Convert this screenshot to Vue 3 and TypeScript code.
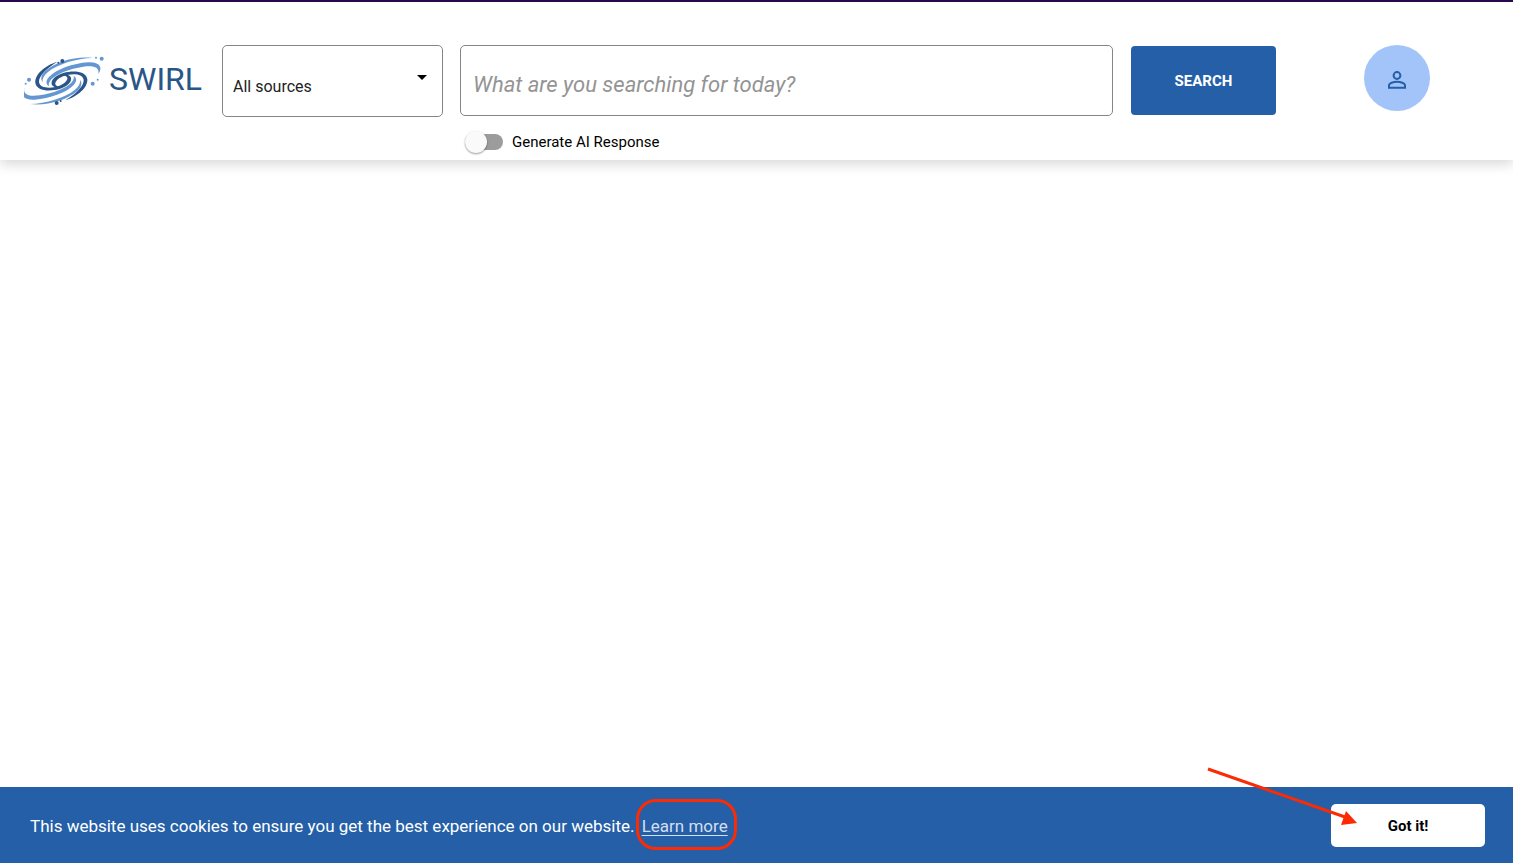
<script setup lang="ts">
import { ref } from 'vue'

const sources = ['All sources']
const source = ref(sources[0])
const query = ref('')
const generateAi = ref(false)
</script>

<template>
  <div class="page">
    <header class="header">
      <a class="logo" href="#" aria-label="SWIRL home">
        <svg class="galaxy" viewBox="12 18 243 150" aria-hidden="true">
          <defs>
            <g id="arm">
              <path fill="#6496d2" d="M235 73 C240 51 220 46 190 50 C148 56 110 72 94 88 C87 96 85 103 87 109 C77 102 77 92 87 81 C108 58 160 40 204 37 C238 35 250 51 235 73Z" />
              <path fill="#6496d2" d="M218 24 C170 25 114 42 84 66 C72 76 66 86 68 96 C60 86 64 74 76 63 C110 34 168 18 218 24Z" />
              <path fill="#2a5587" d="M112 35 C74 46 44 74 46 98 C49 122 86 126 118 117 C142 109 156 96 153 83 C149 73 134 71 118 76 C134 75 144 79 142 87 C139 98 124 107 106 111 C84 115 60 114 57 96 C56 76 84 52 112 35Z" />
            </g>
          </defs>
          <use href="#arm" />
          <use href="#arm" transform="rotate(180 124 93)" />
          <g fill="#2a5587">
            <circle cx="127" cy="33" r="6" />
            <circle cx="115" cy="38" r="3" />
            <circle cx="110" cy="159" r="6" />
            <circle cx="122" cy="153" r="3" />
          </g>
          <g fill="#6496d2">
            <circle cx="245" cy="26" r="6" />
            <circle cx="228" cy="23" r="3" />
            <circle cx="218" cy="101" r="6" />
            <circle cx="233" cy="89" r="3" />
            <circle cx="27" cy="89" r="6" />
            <circle cx="17" cy="101" r="3" />
          </g>
        </svg>
        <span class="wordmark">SWIRL</span>
      </a>

      <div class="source">
        <select v-model="source" aria-label="Source">
          <option v-for="s in sources" :key="s">{{ s }}</option>
        </select>
        <svg class="caret" viewBox="0 0 10 5" aria-hidden="true"><path d="M0 0h10L5 5z" /></svg>
      </div>

      <div class="search">
        <input
          v-model="query"
          class="query"
          type="text"
          aria-label="Search"
          placeholder="What are you searching for today?"
        />
        <label class="toggle">
          <input v-model="generateAi" type="checkbox" role="switch" />
          <span>Generate AI Response</span>
        </label>
      </div>

      <button class="submit" type="button">SEARCH</button>

      <button class="avatar" type="button" aria-label="Account">
        <svg viewBox="0 0 18 18" aria-hidden="true">
          <circle cx="9" cy="4.5" r="3.4" />
          <path d="M1 16.8v-2.6c0-2 4.5-3.5 8-3.5s8 1.5 8 3.5v2.6z" />
        </svg>
      </button>
    </header>

    <main class="results"></main>

    <footer class="cookies">
      <p>
        This website uses cookies to ensure you get the best experience on our website.
        <a class="learn" href="#">Learn more</a>
      </p>
      <button class="accept" type="button">
        Got it!
        <svg class="arrow" viewBox="0 0 152 60" aria-hidden="true">
          <path d="M2 2L139 50" fill="none" stroke="#fc2b03" stroke-width="3" />
          <path d="M151 56l-11-12-5 14z" fill="#fc2b03" />
        </svg>
      </button>
    </footer>
  </div>
</template>

<style>
body {
  margin: 0;
}
</style>

<style scoped>
.page {
  display: flex;
  flex-direction: column;
  min-height: 100vh;
  box-sizing: border-box;
  border-top: 2px solid #2a0753;
  background: #fff;
  color: #000;
  font-family: Roboto, "Liberation Sans", sans-serif;
}

button,
select,
input {
  box-sizing: border-box;
  margin: 0;
  font-family: inherit;
}

button {
  border: 0;
  cursor: pointer;
}

.header {
  display: flex;
  align-items: flex-start;
  padding: 43px 83px 6px 24px;
  box-shadow: 0 4px 12px rgba(0, 0, 0, 0.16);
}

.logo {
  display: flex;
  align-items: center;
  gap: 4px;
  flex: 0 0 198px;
  height: 72px;
  color: #2a5587;
  text-decoration: none;
}

.galaxy {
  width: 81px;
  height: 50px;
}

.wordmark {
  padding-bottom: 4px;
  font-size: 32px;
  line-height: 36px;
}

.source {
  position: relative;
  flex: 0 0 221px;
  margin-right: 17px;
}

.source select {
  display: block;
  appearance: none;
  width: 100%;
  height: 72px;
  padding: 10px 40px 0 10px;
  border: 1px solid #858585;
  border-radius: 5px;
  background: #fff;
  color: #222;
  font-size: 16px;
}

.caret {
  position: absolute;
  top: 30px;
  right: 16px;
  width: 10px;
  height: 5px;
  pointer-events: none;
}

.search {
  display: flex;
  flex-direction: column;
  align-items: flex-start;
  flex: 1;
  min-width: 0;
  margin-right: 18px;
}

.query {
  width: 100%;
  height: 71px;
  padding: 8px 12px 0;
  border: 1px solid #858585;
  border-radius: 5px;
  background: #fff;
  font-size: 22px;
}

.query::placeholder {
  color: #949494;
  font-style: italic;
  opacity: 1;
}

.toggle {
  display: flex;
  align-items: center;
  gap: 9px;
  height: 24px;
  margin: 14px 0 0 5px;
  font-size: 15px;
}

.toggle input {
  display: flex;
  align-items: center;
  appearance: none;
  width: 38px;
  height: 16px;
  border-radius: 8px;
  background: #9c9c9c;
}

.toggle input::before {
  content: "";
  width: 22px;
  height: 22px;
  border-radius: 50%;
  background: #fafafa;
  box-shadow: 0 1px 2px rgba(0, 0, 0, 0.4);
}

.toggle input:checked::before {
  margin-left: 16px;
}

.submit {
  flex: 0 0 145px;
  height: 69px;
  margin: 1px 88px 0 0;
  border-radius: 4px;
  background: #245fa8;
  color: #fff;
  font-size: 15px;
  font-weight: 700;
}

.avatar {
  display: grid;
  place-items: center;
  flex: 0 0 66px;
  height: 66px;
  padding: 4px 0 0;
  border-radius: 50%;
  background: #a3c4f9;
}

.avatar svg {
  width: 18px;
  height: 18px;
  fill: none;
  stroke: #245fa8;
  stroke-width: 2;
}

.results {
  flex: 1;
}

.cookies {
  display: flex;
  align-items: center;
  justify-content: space-between;
  padding: 17px 28px 16px 30px;
  background: #245fa8;
  color: #fff;
}

.cookies p {
  margin: 0;
  font-size: 17px;
  line-height: 24px;
}

.learn {
  position: relative;
  margin-left: 3px;
  color: #d3dfee;
  text-underline-offset: 3px;
}

.learn::after {
  content: "";
  position: absolute;
  inset: -17px -9px -14px -6px;
  border: 3px solid #fc2b03;
  border-radius: 20px;
}

.accept {
  position: relative;
  width: 154px;
  height: 43px;
  border-radius: 5px;
  background: #fff;
  color: #000;
  font-size: 15px;
  font-weight: 700;
}

.arrow {
  position: absolute;
  top: -37px;
  right: 127px;
  width: 152px;
  height: 60px;
  pointer-events: none;
}
</style>
